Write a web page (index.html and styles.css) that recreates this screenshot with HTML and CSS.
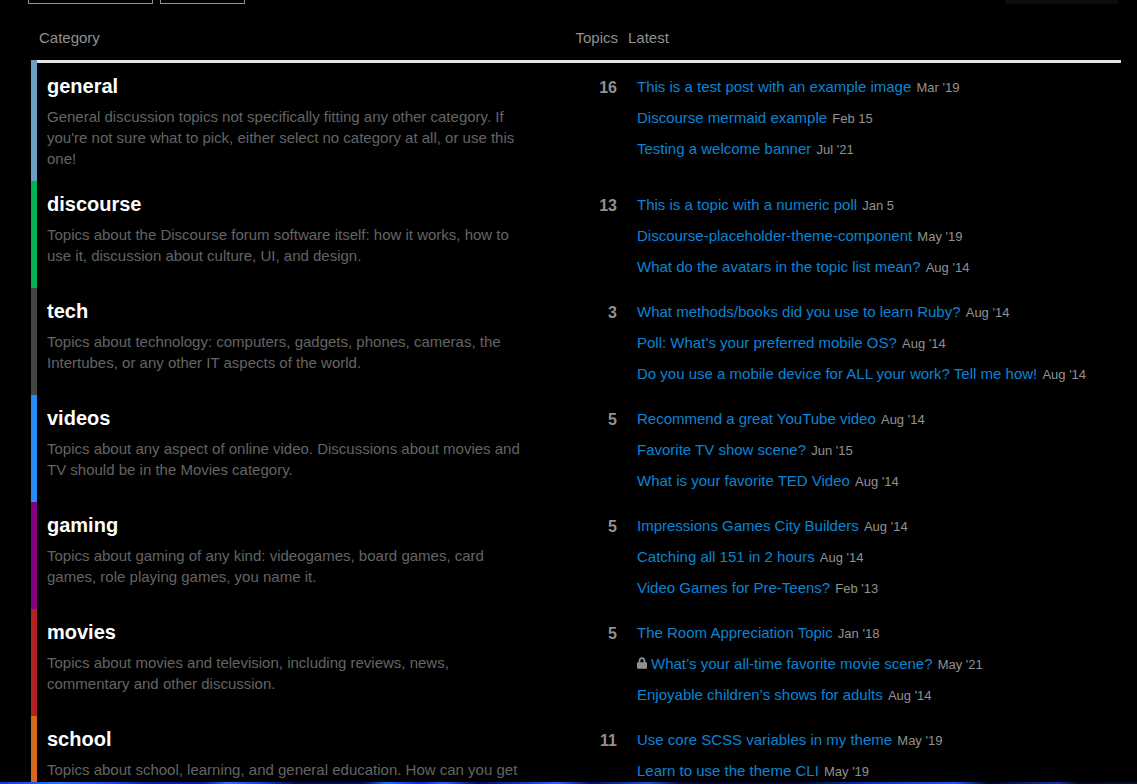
FILE: index.html
```
<!DOCTYPE html>
<html lang="en">

<head>
    <meta charset="UTF-8">
    <meta name="viewport" content="width=device-width, initial-scale=1.0">
    <title>Categories</title>
    <link rel="stylesheet" href="styles.css">
</head>

<body>
    <main>
        <div class="controls">
            <button class="filter filter-category" aria-label="Category filter"></button>
            <button class="filter filter-tag" aria-label="Tag filter"></button>
            <button class="new-topic" aria-label="New topic"></button>
        </div>

        <table class="category-list">
            <thead>
                <tr>
                    <th class="category">Category</th>
                    <th class="topics">Topics</th>
                    <th class="latest">Latest</th>
                </tr>
            </thead>
            <tbody>
                <tr class="general">
                    <td class="category">
                        <h3><a href="#">general</a></h3>
                        <p>General discussion topics not specifically fitting any other category. If you're not sure what to pick, either select no category at all, or use this one!</p>
                    </td>
                    <td class="topics">16</td>
                    <td class="latest">
                        <div class="topic"><a href="#">This is a test post with an example image</a> <span>Mar '19</span></div>
                        <div class="topic"><a href="#">Discourse mermaid example</a> <span>Feb 15</span></div>
                        <div class="topic"><a href="#">Testing a welcome banner</a> <span>Jul '21</span></div>
                    </td>
                </tr>
                <tr class="discourse">
                    <td class="category">
                        <h3><a href="#">discourse</a></h3>
                        <p>Topics about the Discourse forum software itself: how it works, how to use it, discussion about culture, UI, and design.</p>
                    </td>
                    <td class="topics">13</td>
                    <td class="latest">
                        <div class="topic"><a href="#">This is a topic with a numeric poll</a> <span>Jan 5</span></div>
                        <div class="topic"><a href="#">Discourse-placeholder-theme-component</a> <span>May '19</span></div>
                        <div class="topic"><a href="#">What do the avatars in the topic list mean?</a> <span>Aug '14</span></div>
                    </td>
                </tr>
                <tr class="tech">
                    <td class="category">
                        <h3><a href="#">tech</a></h3>
                        <p>Topics about technology: computers, gadgets, phones, cameras, the Intertubes, or any other IT aspects of the world.</p>
                    </td>
                    <td class="topics">3</td>
                    <td class="latest">
                        <div class="topic"><a href="#">What methods/books did you use to learn Ruby?</a> <span>Aug '14</span></div>
                        <div class="topic"><a href="#">Poll: What’s your preferred mobile OS?</a> <span>Aug '14</span></div>
                        <div class="topic"><a href="#">Do you use a mobile device for ALL your work? Tell me how!</a> <span>Aug '14</span></div>
                    </td>
                </tr>
                <tr class="videos">
                    <td class="category">
                        <h3><a href="#">videos</a></h3>
                        <p>Topics about any aspect of online video. Discussions about movies and TV should be in the Movies category.</p>
                    </td>
                    <td class="topics">5</td>
                    <td class="latest">
                        <div class="topic"><a href="#">Recommend a great YouTube video</a> <span>Aug '14</span></div>
                        <div class="topic"><a href="#">Favorite TV show scene?</a> <span>Jun '15</span></div>
                        <div class="topic"><a href="#">What is your favorite TED Video</a> <span>Aug '14</span></div>
                    </td>
                </tr>
                <tr class="gaming">
                    <td class="category">
                        <h3><a href="#">gaming</a></h3>
                        <p>Topics about gaming of any kind: videogames, board games, card games, role playing games, you name it.</p>
                    </td>
                    <td class="topics">5</td>
                    <td class="latest">
                        <div class="topic"><a href="#">Impressions Games City Builders</a> <span>Aug '14</span></div>
                        <div class="topic"><a href="#">Catching all 151 in 2 hours</a> <span>Aug '14</span></div>
                        <div class="topic"><a href="#">Video Games for Pre-Teens?</a> <span>Feb '13</span></div>
                    </td>
                </tr>
                <tr class="movies">
                    <td class="category">
                        <h3><a href="#">movies</a></h3>
                        <p>Topics about movies and television, including reviews, news, commentary and other discussion.</p>
                    </td>
                    <td class="topics">5</td>
                    <td class="latest">
                        <div class="topic"><a href="#">The Room Appreciation Topic</a> <span>Jan '18</span></div>
                        <div class="topic"><svg class="lock" viewBox="0 0 448 512" aria-hidden="true"><path d="M400 224h-24v-72C376 68.200 307.800 0 224 0S72 68.200 72 152v72H48c-26.500 0-48 21.500-48 48v192c0 26.500 21.500 48 48 48h352c26.500 0 48-21.500 48-48V272c0-26.500-21.500-48-48-48zm-104 0H152v-72c0-39.700 32.300-72 72-72s72 32.300 72 72v72z"/></svg><a href="#">What’s your all-time favorite movie scene?</a> <span>May '21</span></div>
                        <div class="topic"><a href="#">Enjoyable children’s shows for adults</a> <span>Aug '14</span></div>
                    </td>
                </tr>
                <tr class="school">
                    <td class="category">
                        <h3><a href="#">school</a></h3>
                        <p>Topics about school, learning, and general education. How can you get</p>
                    </td>
                    <td class="topics">11</td>
                    <td class="latest">
                        <div class="topic"><a href="#">Use core SCSS variables in my theme</a> <span>May '19</span></div>
                        <div class="topic"><a href="#">Learn to use the theme CLI</a> <span>May '19</span></div>
                    </td>
                </tr>
            </tbody>
        </table>
    </main>
    <div class="bottom-strip"></div>
</body>

</html>
```
FILE: styles.css
```
* {
    box-sizing: border-box;
}

body {
    display: flex;
    flex-direction: column;
    height: 100vh;
    margin: 0;
    overflow: hidden;
    background: #000;
    color: #919191;
    font-family: Arial, "Liberation Sans", sans-serif;
    font-size: 15px;
    line-height: 21px;
}

main {
    flex: 1;
    min-height: 0;
    overflow: hidden;
    padding: 0 16px 0 28px;
}

a {
    color: #0a84d4;
    text-decoration: none;
}

/* only the lower edge of the filter row is scrolled into view */
.controls {
    display: flex;
    align-items: flex-end;
    gap: 7px;
    height: 4px;
    margin-right: 3px;
    overflow: hidden;
}

.controls button {
    flex: none;
    height: 32px;
    padding: 0;
}

.filter {
    border: 1px solid #919191;
    background: #000;
}

.filter-category {
    width: 125px;
}

.filter-tag {
    width: 85px;
}

.new-topic {
    width: 113px;
    margin-left: auto;
    border: none;
    background: #0c0c0c;
}

.category-list {
    width: calc(100% - 3px);
    margin: 11px 0 0 3px;
    table-layout: fixed;
    border-collapse: collapse;
}

.category-list thead {
    border-bottom: 3px solid #e4e4e4;
}

.category-list th {
    padding: 12px 5px;
    font-weight: normal;
    text-align: left;
}

.category-list td {
    padding: 12px 10px;
    vertical-align: top;
}

.category-list td.category {
    border-left: 6px solid;
}

th.category {
    width: 46%;
}

.category-list th.topics {
    width: 89px;
    text-align: right;
}

.category-list td.topics {
    padding: 14px 6px 0 0;
    font-size: 16px;
    font-weight: bold;
    text-align: right;
}

.category-list td.latest {
    padding: 13px 0 1px 14px;
}

.category h3 {
    margin: 0 0 9px;
    font-size: 20px;
    line-height: 22px;
}

.category h3 a {
    color: #fff;
}

.category p {
    margin: 0;
    color: #646464;
}

.topic {
    margin-bottom: 10px;
}

.topic span {
    margin-left: 1px;
    font-size: 13px;
    line-height: 13px;
}

.lock {
    width: 10px;
    height: 12px;
    margin-right: 4px;
    fill: #919191;
}

.category-list .general .category {
    border-color: #6c9fc1;
}

.category-list .discourse .category {
    border-color: #00b355;
}

.category-list .tech .category {
    border-color: #444;
}

.category-list .videos .category {
    border-color: #288cf5;
}

.category-list .gaming .category {
    border-color: #800080;
}

.category-list .movies .category {
    border-color: #b22222;
}

.category-list .school .category {
    border-color: #d2691e;
}

.bottom-strip {
    flex: none;
    height: 2px;
    background: linear-gradient(90deg, #0a3ce0 0%, #2a70ff 5%, #1448e8 10%, #0422a0 13%, #0422a0 18%, #2a70ff 20%, #1040d8 23%, #040c50 26%, #040c60 32%, #1a70ff 34%, #0a28e0 37%, #2a60ff 39%, #040c60 42%, #1038c0 46%, #2a60ff 49%, #040c60 52%, #1a50d0 57%, #020838 60%, #02062c 70%, #0a30b0 76%, #1858f0 84%, #020420 87%, #1030a0 93%, #020818 95%, #061428 100%);
}
```
